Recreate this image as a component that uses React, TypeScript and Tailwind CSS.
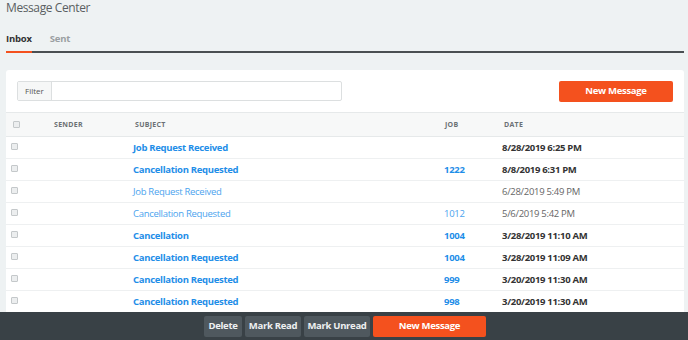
import type { ReactNode } from 'react'

type Row = {
	subject: string
	job?: string
	date: string
	unread: boolean
}

const rows: Row[] = [
	{ subject: 'Job Request Received', date: '8/28/2019 6:25 PM', unread: true },
	{ subject: 'Cancellation Requested', job: '1222', date: '8/8/2019 6:31 PM', unread: true },
	{ subject: 'Job Request Received', date: '6/28/2019 5:49 PM', unread: false },
	{ subject: 'Cancellation Requested', job: '1012', date: '5/6/2019 5:42 PM', unread: false },
	{ subject: 'Cancellation', job: '1004', date: '3/28/2019 11:10 AM', unread: true },
	{ subject: 'Cancellation Requested', job: '1004', date: '3/28/2019 11:09 AM', unread: true },
	{ subject: 'Cancellation Requested', job: '999', date: '3/20/2019 11:30 AM', unread: true },
	{ subject: 'Cancellation Requested', job: '998', date: '3/20/2019 11:30 AM', unread: true },
]

function Check() {
	return <span className="block w-[7px] h-[7px] rounded-[1px] border border-[#c4c8ca] bg-[#eceeef]" />
}

function BarButton({ children, className = '' }: { children: ReactNode; className?: string }) {
	return (
		<button
			className={`h-[21px] rounded-[2px] text-[9.5px] tracking-[-0.3px] font-bold text-[#eef0f1] ${className}`}
		>
			{children}
		</button>
	)
}

export default function App() {
	return (
		<div
			className="relative w-[688px] h-[340px] overflow-hidden bg-[#eef2f3] text-[#555]"
			style={{ fontFamily: '"Open Sans", "Liberation Sans", sans-serif' }}
		>
			<h1 className="px-[6px] -mt-[1px] text-[12px] tracking-[-0.4px] leading-[18px] text-[#5a5f62]">
				Message Center
			</h1>

			<div className="ml-[6px] mr-[4px] mt-[15px] flex items-end gap-[18px] border-b-[2px] border-[#4a4f52] text-[9.5px] tracking-[-0.2px] font-bold">
				<span className="pb-[5px] border-b-[2px] border-[#f4511e] -mb-[2px] text-[#333]">Inbox</span>
				<span className="pb-[5px] text-[#9a9fa2]">Sent</span>
			</div>

			<div className="ml-[6px] mr-[4px] mt-[17px] rounded-t-[3px] bg-white">
				<div className="flex items-center justify-between pl-[11px] pr-[11px] h-[42px]">
					<div className="flex h-[20px] w-[325px] rounded-[2px] border border-[#dcdfe0] text-[8px]">
						<span className="flex items-center px-[7px] bg-[#f6f7f7] border-r border-[#dcdfe0] text-[#555]">
							Filter
						</span>
						<span className="flex-1" />
					</div>
					<button className="h-[21px] w-[114px] rounded-[2px] bg-[#f4511e] text-[9.5px] tracking-[-0.3px] font-bold text-white">
						New Message
					</button>
				</div>

				<div className="grid grid-cols-[48px_79px_310px_59px_1fr] items-center h-[25px] border-t border-b border-[#e6e9ea] bg-[#f7f8f8] text-[7px] font-bold tracking-[0.04em] text-[#6b7074]">
					<span className="pl-[7px] -mt-[1px]">
						<Check />
					</span>
					<span>SENDER</span>
					<span className="pl-[2px]">SUBJECT</span>
					<span className="pl-[2px]">JOB</span>
					<span className="pl-[2px]">DATE</span>
				</div>

				{rows.map((r, i) => (
					<div
						key={i}
						className="grid grid-cols-[48px_79px_310px_59px_1fr] items-center h-[22px] border-b border-[#eef0f1] text-[9.5px] tracking-[-0.3px]"
					>
						<span className="pl-[5px] -mt-[2px]">
							<Check />
						</span>
						<span />
						<span className={r.unread ? 'font-bold text-[#1f8ee8]' : 'text-[#4ba3ee]'}>{r.subject}</span>
						<span className={r.unread ? 'pl-[1px] font-bold text-[#1f8ee8]' : 'pl-[1px] text-[#4ba3ee]'}>
							{r.job}
						</span>
						<span className={r.unread ? 'font-bold text-[#333]' : 'text-[#666]'}>{r.date}</span>
					</div>
				))}
			</div>

			<div className="absolute left-0 right-0 bottom-0 h-[28px] bg-[#394146] flex items-center pl-[204px] gap-[3px]">
				<BarButton className="w-[38px] bg-[#4f585e]">Delete</BarButton>
				<BarButton className="w-[56px] bg-[#4f585e]">Mark Read</BarButton>
				<BarButton className="w-[66px] bg-[#4f585e]">Mark Unread</BarButton>
				<BarButton className="w-[113px] bg-[#f4511e] text-white">New Message</BarButton>
			</div>
		</div>
	)
}
